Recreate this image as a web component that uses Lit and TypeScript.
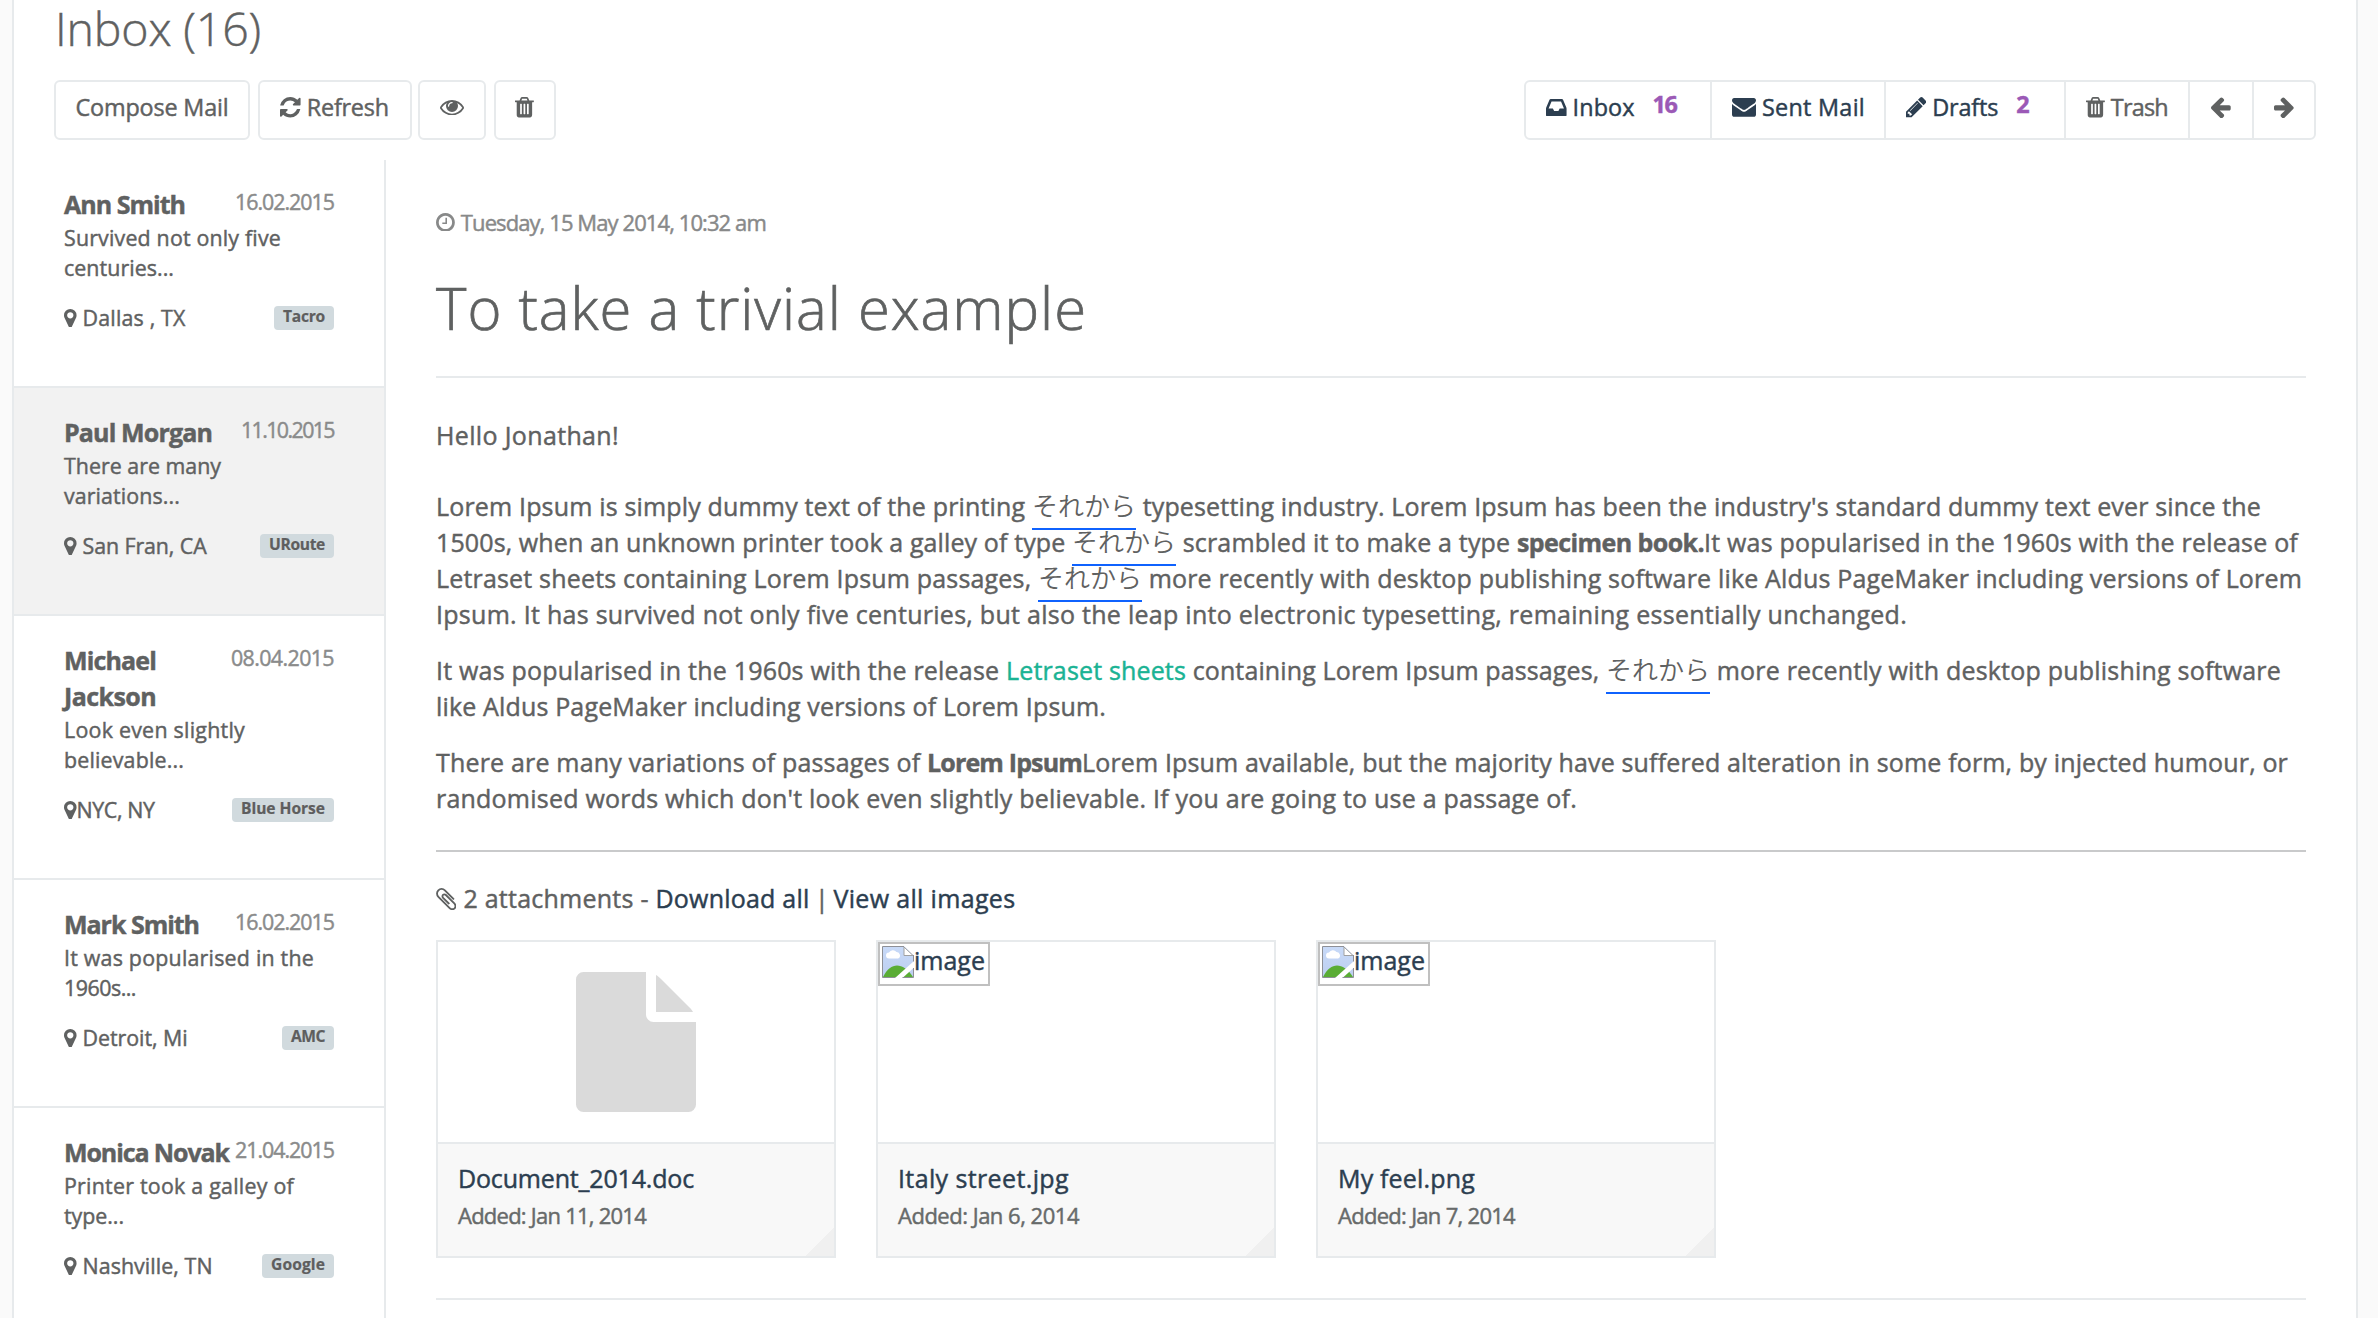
import { LitElement, html, css, svg, TemplateResult } from "lit";
import { customElement, property } from "lit/decorators.js";

type Glyph = { box: [number, number, number, number]; d: string };

const GLYPHS: Record<string, Glyph> = {
  refresh: {
    box: [128, 128, 1536, 1536],
    d: "M1639 1056q0 5-1 7-64 268-268 434.500t-478 166.500q-146 0-282.500-55t-243.500-157l-129 129q-19 19-45 19t-45-19-19-45v-448q0-26 19-45t45-19h448q26 0 45 19t19 45-19 45l-137 137q71 66 161 102t187 36q134 0 250-65t186-179q11-17 53-117 8-23 30-23h192q13 0 22.500 9.500t9.500 22.500zm25-800v448q0 26-19 45t-45 19h-448q-26 0-45-19t-19-45 19-45l138-138q-148-137-349-137-134 0-250 65t-186 179q-11 17-53 117-8 23-30 23h-199q-13 0-22.500-9.500t-9.500-22.500v-7q65-268 270-434.500t480-166.500q146 0 284 55.500t245 156.500l130-129q19-19 45-19t45 19 19 45z",
  },
  eye: {
    box: [0, 384, 1792, 1152],
    d: "M1664 960q-152-236-381-353 61 104 61 225 0 185-131.500 316.500t-316.500 131.500-316.500-131.500-131.500-316.500q0-121 61-225-229 117-381 353 133 205 333.500 326.500t434.500 121.500 434.500-121.500 333.500-326.500zm-720-384q0-20-14-34t-34-14q-125 0-214.500 89.500t-89.500 214.500q0 20 14 34t34 14 34-14 14-34q0-86 61-147t147-61q20 0 34-14t14-34zm848 384q0 34-20 69-140 230-376.500 368.500t-499.500 138.500-499.500-139-376.500-368q-20-35-20-69t20-69q140-229 376.500-368t499.500-139 499.500 139 376.500 368q20 35 20 69z",
  },
  trash: {
    box: [192, 128, 1408, 1536],
    d: "M704 1376v-704q0-14-9-23t-23-9h-64q-14 0-23 9t-9 23v704q0 14 9 23t23 9h64q14 0 23-9t9-23zm256 0v-704q0-14-9-23t-23-9h-64q-14 0-23 9t-9 23v704q0 14 9 23t23 9h64q14 0 23-9t9-23zm256 0v-704q0-14-9-23t-23-9h-64q-14 0-23 9t-9 23v704q0 14 9 23t23 9h64q14 0 23-9t9-23zm-544-992h448l-48-117q-7-9-17-11h-317q-10 2-17 11zm928 32v64q0 14-9 23t-23 9h-96v948q0 83-47 143.500t-113 60.500h-832q-66 0-113-58.500t-47-141.500v-952h-96q-14 0-23-9t-9-23v-64q0-14 9-23t23-9h309l70-167q15-37 54-63t79-26h320q40 0 79 26t54 63l70 167h309q14 0 23 9t9 23z",
  },
  inbox: {
    box: [128, 256, 1536, 1280],
    d: "M1151 960h316q-1-3-2.500-8t-2.500-8l-212-496h-708l-212 496q-1 2-2.500 8t-2.500 8h316l95 192h320zm513 30v482q0 26-19 45t-45 19h-1408q-26 0-45-19t-19-45v-482q0-62 25-123l238-552q10-25 36.500-42t52.500-17h832q26 0 52.500 17t36.500 42l238 552q25 61 25 123z",
  },
  envelope: {
    box: [0, 256, 1792, 1408],
    d: "M1792 710v794q0 66-47 113t-113 47h-1472q-66 0-113-47t-47-113v-794q44 49 101 87 362 246 497 345 57 42 92.500 65.500t94.500 48 110 24.500h2q51 0 110-24.500t94.500-48 92.500-65.500q170-123 498-345 57-39 100-87zm0-294q0 79-49 151t-122 123q-376 261-468 325-10 7-42.500 30.500t-54 38-52 32.500-57.500 27-50 9h-2q-23 0-50-9t-57.500-27-52-32.500-54-38-42.500-30.500q-91-64-262-182.500t-205-142.500q-62-42-117-115.500t-55-136.500q0-78 41.500-130t118.500-52h1472q65 0 112.500 47t47.500 113z",
  },
  pencil: {
    box: [128, 149, 1515, 1515],
    d: "M491 1536l91-91-235-235-91 91v107h128v128h107zm523-928q0-22-22-22-10 0-17 7l-542 542q-7 7-7 17 0 22 22 22 10 0 17-7l542-542q7-7 7-17zm-54-192l416 416-832 832h-416v-416zm683 96q0 53-37 90l-166 166-416-416 166-165q36-38 90-38 53 0 91 38l235 234q37 39 37 91z",
  },
  left: {
    box: [64, 151, 1472, 1588],
    d: "M1536 896v128q0 53-32.500 90.500t-84.500 37.500h-704l293 294q38 36 38 90t-38 90l-75 76q-37 37-90 37-52 0-91-37l-651-652q-37-37-37-90 0-52 37-91l651-650q38-38 91-38 52 0 90 38l75 74q38 38 38 91t-38 91l-293 293h704q52 0 84.500 37.500t32.500 90.500z",
  },
  right: {
    box: [128, 151, 1472, 1588],
    d: "M1600 960q0 54-37 91l-651 651q-39 37-91 37-51 0-90-37l-75-75q-38-38-38-91t38-91l293-293h-704q-52 0-84.500-37.500t-32.500-90.500v-128q0-53 32.500-90.500t84.500-37.500h704l-293-294q-38-36-38-90t38-90l75-75q38-38 90-38 53 0 91 38l651 651q37 35 37 90z",
  },
  pin: {
    box: [384, 128, 1024, 1536],
    d: "M1152 640q0-106-75-181t-181-75-181 75-75 181 75 181 181 75 181-75 75-181zm256 0q0 109-33 179l-364 774q-16 33-47.500 52t-67.500 19-67.500-19-46.500-52l-365-774q-33-70-33-179 0-212 150-362t362-150 362 150 150 362z",
  },
  clock: {
    box: [128, 128, 1536, 1536],
    d: "M1024 544v448q0 14-9 23t-23 9h-320q-14 0-23-9t-9-23v-64q0-14 9-23t23-9h224v-352q0-14 9-23t23-9h64q14 0 23 9t9 23zm416 352q0-148-73-273t-198-198-273-73-273 73-198 198-73 273 73 273 198 198 273 73 273-73 198-198 73-273zm224 0q0 209-103 385.500t-279.500 279.500-385.500 103-385.500-103-279.500-279.500-103-385.500 103-385.500 279.500-279.500 385.500-103 385.500 103 279.500 279.500 103 385.500z",
  },
  clip: {
    box: [190, 130, 1410, 1532],
    d: "M1596 1385q0 117-79 196t-196 79q-135 0-235-100l-777-776q-113-115-113-271 0-159 110-270t269-111q158 0 273 113l605 606q10 10 10 22 0 16-30.500 46.500t-46.500 30.500q-13 0-23-10l-606-607q-79-77-181-77-106 0-179 75t-73 181q0 105 76 181l776 777q63 63 145 63 64 0 106-42t42-106q0-82-63-145l-581-581q-26-24-60-24-29 0-48 19t-19 48q0 32 25 59l410 410q10 10 10 22 0 16-31 47t-47 31q-12 0-22-10l-410-410q-63-61-63-149 0-82 57-139t139-57q88 0 149 63l581 581q100 98 100 235z",
  },
};

/** Glyph drawn at a given em size (1em = 1792 units). */
const icon = (name: string, em: number): TemplateResult => {
  const g = GLYPHS[name];
  const k = em / 1792;
  return html`<svg
    class="icon"
    viewBox=${g.box.join(" ")}
    width=${g.box[2] * k}
    height=${g.box[3] * k}
    aria-hidden="true"
  >
    ${svg`<path d=${g.d} fill="currentColor"></path>`}
  </svg>`;
};

/** Single-line text tracked so that it fills a set width. */
@customElement("fit-text")
export class FitText extends LitElement {
  @property({ type: Number }) w = 0;

  static styles = css`
    :host {
      display: inline-block;
      white-space: pre;
      flex: none;
    }
  `;

  render() {
    return html`<slot></slot>`;
  }

  updated() {
    const count = (this.textContent ?? "").length;
    if (!this.w || !count) return;
    this.style.width = "max-content";
    this.style.letterSpacing = "0px";
    const natural = this.getBoundingClientRect().width;
    this.style.letterSpacing = `${(this.w - natural) / count}px`;
    this.style.width = `${this.w}px`;
  }
}

const fit = (text: string, w: number, cls = "") =>
  html`<fit-text class=${cls} .w=${w}>${text}</fit-text>`;

interface Message {
  name: [string, number][];
  date: [string, number];
  lines: [string, number][];
  place: [string, number];
  tight?: boolean;
  label: [string, number];
  active?: boolean;
}

const MESSAGES: Message[] = [
  {
    name: [["Ann Smith", 121]],
    date: ["16.02.2015", 99],
    lines: [["Survived not only five", 217], ["centuries...", 110]],
    place: ["Dallas , TX", 103],
    label: ["Tacro", 42],
  },
  {
    name: [["Paul Morgan", 148]],
    date: ["11.10.2015", 93],
    lines: [["There are many", 157], ["variations...", 116]],
    place: ["San Fran, CA", 124],
    label: ["URoute", 56],
    active: true,
  },
  {
    name: [["Michael", 92], ["Jackson", 92]],
    date: ["08.04.2015", 103],
    lines: [["Look even slightly", 181], ["believable...", 120]],
    place: ["NYC, NY", 78],
    tight: true,
    label: ["Blue Horse", 84],
  },
  {
    name: [["Mark Smith", 135]],
    date: ["16.02.2015", 99],
    lines: [["It was popularised in the", 250], ["1960s...", 72]],
    place: ["Detroit, Mi", 105],
    label: ["AMC", 34],
  },
  {
    name: [["Monica Novak", 165]],
    date: ["21.04.2015", 99],
    lines: [["Printer took a galley of", 230], ["type...", 60]],
    place: ["Nashville, TN", 130],
    label: ["Google", 54],
  },
];

const JP = "それから";

@customElement("app-root")
export class AppRoot extends LitElement {
  static styles = css`
    :host {
      display: block;
      width: 2378px;
      height: 1318px;
      overflow: hidden;
      background: #fafafa;
      color: #5f6161;
      font-family: "Open Sans", "Noto Sans", "Noto Sans CJK JP", sans-serif;
      font-stretch: 88%;
      font-size: 25px;
      line-height: 36px;
      -webkit-text-stroke: 0.45px currentColor;
    }
    * {
      box-sizing: border-box;
    }
    .icon {
      display: block;
      flex: none;
    }
    .panel {
      width: 2346px;
      height: 1318px;
      margin-left: 12px;
      background: #fff;
      border: solid #e7eaec;
      border-width: 0 2px;
      overflow: hidden;
    }
    .head {
      height: 80px;
      padding-left: 41px;
      font-size: 46.5px;
      font-weight: 300;
      line-height: 56px;
    }
    .bar {
      display: flex;
      justify-content: space-between;
      height: 80px;
      padding: 0 40px;
      font-size: 23.4px;
      line-height: 50px;
    }
    .actions {
      display: flex;
    }
    .btn {
      height: 60px;
      display: flex;
      align-items: center;
      justify-content: center;
      border: 2px solid #e7eaec;
      border-radius: 6px;
      padding-bottom: 6px;
    }
    .btn .icon {
      margin-top: 1px;
    }
    .compose { width: 196px; margin-right: 8px; }
    .refresh { width: 154px; margin-right: 6px; gap: 6px; padding-right: 1px; }
    .view { width: 68px; margin-right: 8px; }
    .del { width: 62px; padding-right: 1px; }
    .group {
      display: flex;
      height: 60px;
      border: 2px solid #e7eaec;
      border-radius: 6px;
    }
    .tab {
      display: flex;
      align-items: center;
      height: 56px;
      padding: 0 0 6px 20px;
      gap: 6px;
      border-right: 2px solid #e7eaec;
      color: #2c3e50;
    }
    .tab .icon {
      margin-top: 1px;
    }
    .t-inbox { width: 186px; }
    .t-sent { width: 174px; }
    .t-drafts { width: 180px; }
    .t-trash { width: 124px; color: inherit; }
    .t-left { width: 64px; padding-left: 0; justify-content: center; color: inherit; }
    .t-right { width: 60px; padding-left: 0; justify-content: center; color: inherit; border-right: 0; }
    .count {
      color: #9b59b6;
      font-weight: 700;
      margin: -6px 0 0 12px;
    }
    .body {
      display: flex;
      height: 1158px;
    }
    .list {
      width: 372px;
      flex: none;
      border-right: 2px solid #e7eaec;
    }
    .item {
      padding: 26px 50px 53px;
      border-bottom: 2px solid #e7eaec;
      font-size: 21.4px;
      line-height: 30px;
    }
    .item.active {
      background: #f2f2f2;
    }
    .row {
      display: flex;
      justify-content: space-between;
      align-items: flex-start;
    }
    .names {
      display: flex;
      flex-direction: column;
      align-items: flex-start;
      font-size: 25px;
      line-height: 36px;
      font-weight: 700;
    }
    .date {
      margin-top: 1px;
      color: #8a8b8b;
    }
    .lines {
      display: flex;
      flex-direction: column;
      align-items: flex-start;
      padding-top: 1px;
    }
    .foot {
      display: flex;
      justify-content: space-between;
      margin-top: 20px;
    }
    .place {
      display: flex;
      align-items: center;
      gap: 6px;
    }
    .place.tight {
      gap: 0;
    }
    .label {
      height: 24px;
      margin-top: 3px;
      padding: 0 9px;
      border-radius: 4px;
      background: #d1dade;
      color: #5e5e5e;
      font-size: 15.6px;
      font-weight: 700;
      line-height: 20px;
      -webkit-text-stroke-width: 0.2px;
    }
    .mail {
      flex: 1;
      padding: 47px 50px 0;
    }
    .when {
      display: flex;
      align-items: center;
      gap: 6px;
      height: 30px;
      color: #888989;
      font-size: 22px;
    }
    .when fit-text {
      margin-top: -1px;
    }
    .subject {
      height: 111px;
      margin-top: 30px;
      border-bottom: 2px solid #e7eaec;
      font-size: 58px;
      font-weight: 300;
      line-height: 82px;
      -webkit-text-stroke-width: 0.7px;
    }
    .hello {
      height: 36px;
      margin: 39px 0 35px;
    }
    .para {
      display: flex;
      flex-direction: column;
      margin-bottom: 20px;
    }
    .line {
      display: flex;
      height: 36px;
    }
    .strong {
      font-weight: 700;
    }
    .green {
      color: #1ab394;
    }
    .jp {
      height: 42px;
      width: 104px;
      flex: none;
      border-bottom: 2px solid #0f62fe;
      font-family: "Noto Sans CJK JP", sans-serif;
      font-size: 26px;
      line-height: 33px;
      font-weight: 350;
      -webkit-text-stroke-width: 0;
    }
    .rule {
      height: 2px;
      margin: 34px 0 28px;
      background: #c9cacb;
    }
    .attach {
      display: flex;
      align-items: center;
      height: 36px;
    }
    .attach .icon {
      margin: 2px 7px 0 0;
    }
    .link {
      color: #2c3e50;
    }
    .cards {
      display: flex;
      gap: 40px;
      margin-top: 24px;
    }
    .card {
      width: 400px;
      height: 318px;
      border: 2px solid #e7eaec;
      display: flex;
      flex-direction: column;
    }
    .preview {
      height: 202px;
      border-bottom: 2px solid #e7eaec;
    }
    .preview.doc {
      display: flex;
      justify-content: center;
      padding-top: 30px;
      color: #dadada;
    }
    .broken {
      display: flex;
      width: 112px;
      height: 44px;
      border: 2px solid #c0c0c0;
      padding: 2px 0 0 2px;
      color: #2c3e50;
      line-height: 29px;
    }
    .meta {
      flex: 1;
      display: flex;
      flex-direction: column;
      align-items: flex-start;
      padding: 16px 0 0 20px;
      background: linear-gradient(135deg, transparent calc(100% - 20px), #f0f0f0 calc(100% - 20px)) #f8f8f8;
    }
    .added {
      margin-top: 4px;
      color: #676a6a;
      font-size: 22px;
      line-height: 30px;
    }
    .end {
      height: 2px;
      margin-top: 40px;
      background: #e7eaec;
    }
  `;

  private message(m: Message) {
    return html`<div class="item ${m.active ? "active" : ""}">
      <div class="row">
        <div class="names">${m.name.map(([t, w]) => fit(t, w))}</div>
        ${fit(m.date[0], m.date[1], "date")}
      </div>
      <div class="lines">${m.lines.map(([t, w]) => fit(t, w))}</div>
      <div class="foot">
        <div class="place ${m.tight ? "tight" : ""}">
          ${icon("pin", 22)}${fit(m.place[0], m.place[1])}
        </div>
        <div class="label">${fit(m.label[0], m.label[1])}</div>
      </div>
    </div>`;
  }

  private jp() {
    return html`<span class="jp">${JP}</span>`;
  }

  private docIcon() {
    return html`<svg class="icon" width="120" height="140" viewBox="0 0 120 140">
      <path
        fill="currentColor"
        d="M7.500 0H70V42.500A7.500 7.500 0 0 0 77.500 50H120V132.500A7.500 7.500 0 0 1 112.500 140H7.500A7.500 7.500 0 0 1 0 132.500V7.500A7.500 7.500 0 0 1 7.500 0ZM80 3C82 4 83 5 85 7L113 35C115 37 116 38 117 40H80Z"
      />
    </svg>`;
  }

  private brokenImage() {
    return html`<div class="broken">
      <svg class="icon" width="32" height="32" viewBox="0 0 32 32">
        <defs>
          <linearGradient id="sky" x1="0" y1="0" x2="0" y2="1">
            <stop offset="0" stop-color="#c8daf8" />
            <stop offset="1" stop-color="#bccef0" />
          </linearGradient>
        </defs>
        <path d="M.5.500H22.500L31.500 9.500V31.500H.5Z" fill="url(#sky)" />
        <path d="M7 12.500a3 3 0 0 1 0-6 4.500 4.500 0 0 1 7.500-.5 3.400 3.400 0 0 1 1.500 6.500Z" fill="#fff" />
        <path d="M1 31C5 23 10 19.500 15 19.500S26 23 31 31Z" fill="#5aad35" />
        <path d="M13 32L32 15V21.500L20.500 32Z" fill="#fff" />
        <path d="M22 1V9.500H31Z" fill="#fff" stroke="#a0a0a0" />
        <path d="M22 .5H.5V31.500H13.500M20.500 31.500H31.500V22M31.500 15.500V9" fill="none" stroke="#8e9096" />
      </svg>
      ${fit("image", 71)}
    </div>`;
  }

  private card(preview: TemplateResult, doc: boolean, name: [string, number], added: [string, number]) {
    return html`<div class="card">
      <div class="preview ${doc ? "doc" : ""}">${preview}</div>
      <div class="meta">
        ${fit(name[0], name[1], "link")}${fit(added[0], added[1], "added")}
      </div>
    </div>`;
  }

  render() {
    return html`<div class="panel">
      <div class="head">${fit("Inbox (16)", 206)}</div>
      <div class="bar">
        <div class="actions">
          <div class="btn compose">${fit("Compose Mail", 153)}</div>
          <div class="btn refresh">${icon("refresh", 24)}${fit("Refresh", 82)}</div>
          <div class="btn view">${icon("eye", 24)}</div>
          <div class="btn del">${icon("trash", 24)}</div>
        </div>
        <div class="group">
          <div class="tab t-inbox">${icon("inbox", 24)}${fit("Inbox", 62)}${fit("16", 24, "count")}</div>
          <div class="tab t-sent">${icon("envelope", 24)}${fit("Sent Mail", 103)}</div>
          <div class="tab t-drafts">${icon("pencil", 24)}${fit("Drafts", 66)}${fit("2", 13, "count")}</div>
          <div class="tab t-trash">${icon("trash", 24)}${fit("Trash", 57)}</div>
          <div class="tab t-left">${icon("left", 24)}</div>
          <div class="tab t-right">${icon("right", 24)}</div>
        </div>
      </div>
      <div class="body">
        <div class="list">${MESSAGES.map((m) => this.message(m))}</div>
        <div class="mail">
          <div class="when">${icon("clock", 22)}${fit("Tuesday, 15 May 2014, 10:32 am", 305)}</div>
          <div class="subject">${fit("To take a trivial example", 651)}</div>
          <div class="hello">${fit("Hello Jonathan!", 183)}</div>
          <div class="para">
            <div class="line">
              ${fit("Lorem Ipsum is simply dummy text of the printing ", 596)}${this.jp()}${fit(" typesetting industry. Lorem Ipsum has been the industry's standard dummy text ever since the", 1125)}
            </div>
            <div class="line">
              ${fit("1500s, when an unknown printer took a galley of type ", 636)}${this.jp()}${fit(" scrambled it to make a type ", 341)}${fit("specimen book.", 187, "strong")}${fit("It was popularised in the 1960s with the release of", 594)}
            </div>
            <div class="line">
              ${fit("Letraset sheets containing Lorem Ipsum passages, ", 602)}${this.jp()}${fit(" more recently with desktop publishing software like Aldus PageMaker including versions of Lorem", 1160)}
            </div>
            <div class="line">
              ${fit("Ipsum. It has survived not only five centuries, but also the leap into electronic typesetting, remaining essentially unchanged.", 1471)}
            </div>
          </div>
          <div class="para">
            <div class="line">
              ${fit("It was popularised in the 1960s with the release ", 570)}${fit("Letraset sheets", 180, "green")}${fit(" containing Lorem Ipsum passages, ", 420)}${this.jp()}${fit(" more recently with desktop publishing software", 571)}
            </div>
            <div class="line">${fit("like Aldus PageMaker including versions of Lorem Ipsum.", 670)}</div>
          </div>
          <div class="para">
            <div class="line">
              ${fit("There are many variations of passages of ", 491)}${fit("Lorem Ipsum", 155, "strong")}${fit("Lorem Ipsum available, but the majority have suffered alteration in some form, by injected humour, or", 1206)}
            </div>
            <div class="line">
              ${fit("randomised words which don't look even slightly believable. If you are going to use a passage of.", 1141)}
            </div>
          </div>
          <div class="rule"></div>
          <div class="attach">
            ${icon("clip", 26)}${fit("2 attachments - ", 192)}${fit("Download all", 154, "link")}${fit(" | ", 24)}${fit("View all images", 182, "link")}
          </div>
          <div class="cards">
            ${this.card(this.docIcon(), true, ["Document_2014.doc", 236], ["Added: Jan 11, 2014", 188])}
            ${this.card(this.brokenImage(), false, ["Italy street.jpg", 171], ["Added: Jan 6, 2014", 181])}
            ${this.card(this.brokenImage(), false, ["My feel.png", 137], ["Added: Jan 7, 2014", 177])}
          </div>
          <div class="end"></div>
        </div>
      </div>
    </div>`;
  }
}
